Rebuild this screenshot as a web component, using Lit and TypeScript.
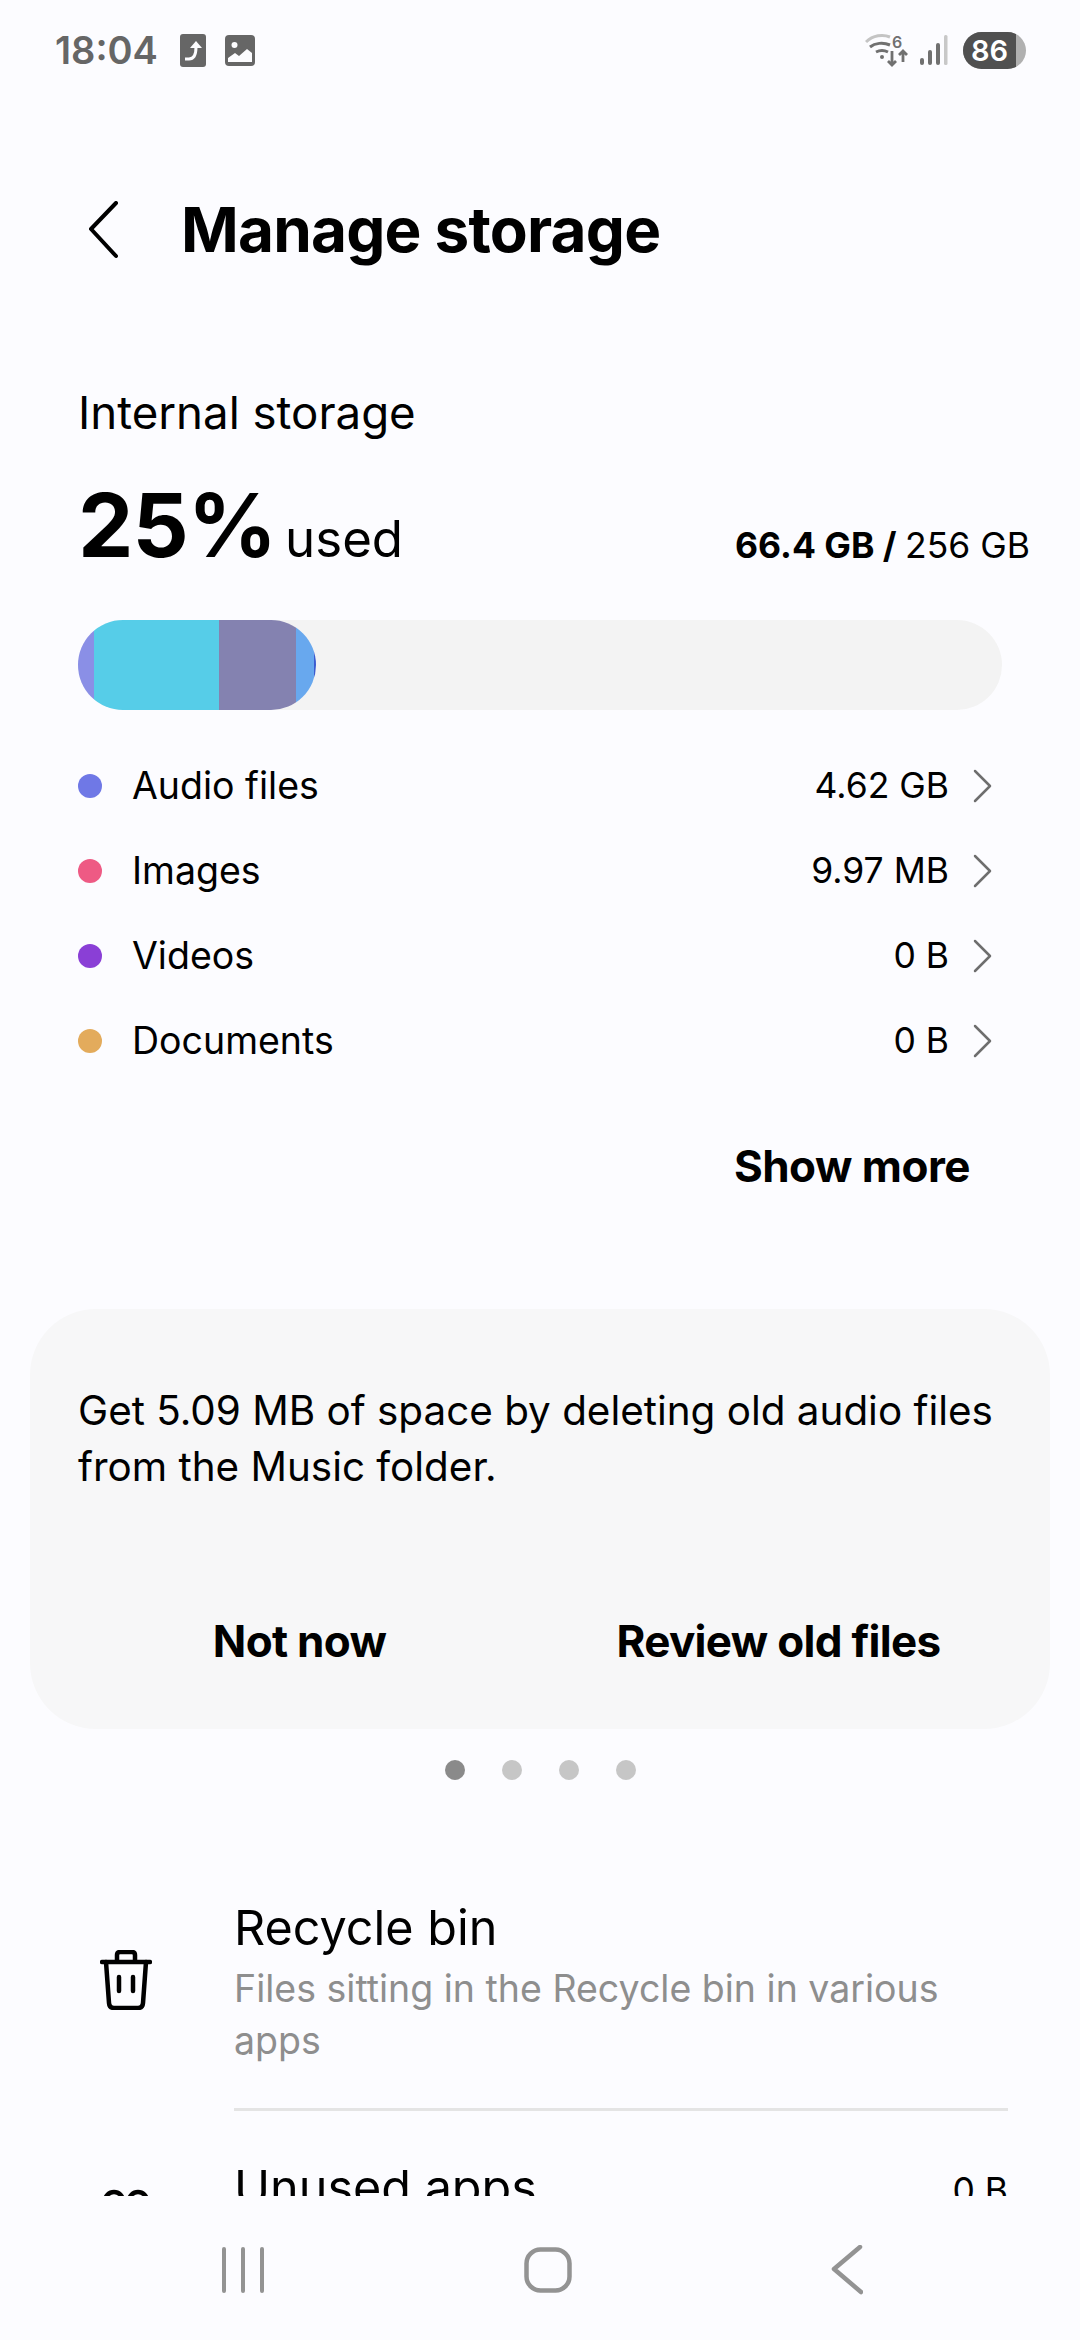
import { LitElement, html, css } from "lit";
import { customElement } from "lit/decorators.js";

const rows = [
  { c: "#6f78e6", l: "Audio files", v: "4.62 GB" },
  { c: "#ee5a84", l: "Images", v: "9.97 MB" },
  { c: "#8a3fd6", l: "Videos", v: "0 B" },
  { c: "#e3ab5c", l: "Documents", v: "0 B" },
];
const segs = [
  { c: "#8a8fe6", w: 16 },
  { c: "#56cde8", w: 125 },
  { c: "#8482b0", w: 77 },
  { c: "#68a8ee", w: 18 },
  { c: "#3a5bd0", w: 2 },
];

@customElement("app-root")
export class AppRoot extends LitElement {
  static styles = css`
    :host { display: block; width: 1080px; height: 2340px; background: #fcfcff; color: #000;
      font-family: Inter, "Noto Sans", sans-serif; overflow: hidden; }
    .page { height: 2340px; display: flex; flex-direction: column; }
    .status { height: 100px; flex: none; display: flex; align-items: center; justify-content: space-between; padding: 0 54px 0 55px; box-sizing: border-box; }
    .status-left { display: flex; align-items: center; color: #666; font-size: 38px; font-weight: 600; }
    .status-left svg { display: block; }
    .time { margin-right: 22px; }
    .ic2 { margin-left: 19px; }
    .status-right { display: flex; align-items: center; }
    .status-right svg { display: block; }
    .signal { margin-left: 9px; }
    .batt { width: 63px; height: 37px; border-radius: 19px; background: #b0b0b0; position: relative; overflow: hidden; margin-left: 15px; }
    .batt i { display: block; width: 53px; height: 37px; background: #505050; }
    .batt span { position: absolute; left: 0; width: 53px; top: 0; line-height: 37px; text-align: center; color: #fff; font-size: 29px; font-weight: 600; }
    .header { height: 130px; margin-top: 65px; flex: none; display: flex; align-items: center; padding-left: 88px; }
    .header h1 { margin: 0 0 0 62px; font-size: 62px; font-weight: 700; letter-spacing: -0.8px; line-height: 1; }
    .scroll { flex: 1; min-height: 0; overflow: hidden; }
    .sec { padding: 0 78px; display: flex; flex-direction: column; }
    .internal { font-size: 45.600px; line-height: 54px; margin-top: 91px; }
    .usedline { display: flex; align-items: flex-end; justify-content: space-between; margin-top: 35px; margin-right: -28px; }
    .pct { font-size: 88px; font-weight: 700; letter-spacing: -1px; line-height: 100px; }
    .used { font-size: 51px; margin-left: 9px; }
    .cap { font-size: 35.500px; line-height: 44px; font-weight: 700; margin-bottom: 7px; }
    .cap span { font-weight: 400; }
    .bar { height: 90px; width: 924px; border-radius: 45px; background: #f3f3f3; margin-top: 45px; }
    .fill { height: 90px; width: 238px; border-radius: 45px; overflow: hidden; display: flex; }
    .fill i { display: block; height: 90px; flex: none; }
    .rows { margin-top: 33px; }
    .row { height: 85px; display: flex; align-items: center; font-size: 37.500px; }
    .dot { width: 24px; height: 24px; border-radius: 50%; margin-right: 30px; }
    .lab { flex: 1; }
    .val { margin-right: 24px; font-size: 35.500px; }
    .chev { margin-right: 9px; display: block; }
    .more { align-self: flex-end; font-size: 44px; font-weight: 700; margin: 55px 32px 0 0; line-height: 56px; letter-spacing: -0.5px; }
    .card { margin: 115px 30px 0; height: 420px; box-sizing: border-box; background: #f7f7f8; border-radius: 66px; padding: 74px 48px 0; display: flex; flex-direction: column; }
    .card p { margin: 0; font-size: 40.400px; line-height: 56px; }
    .acts { display: grid; grid-template-columns: 1fr 1fr; margin: 118px -16px 0 -18px; font-size: 44px; font-weight: 700; line-height: 56px; letter-spacing: -0.7px; text-align: center; }
    .dots { display: flex; justify-content: center; gap: 37px; margin-top: 31px; }
    .dots i { width: 20px; height: 20px; border-radius: 50%; background: #c6c6c6; display: block; }
    .dots i.on { background: #8a8a8a; }
    .items { margin-top: 118px; }
    .item { display: flex; }
    .item .icon { width: 234px; flex: none; display: flex; justify-content: center; box-sizing: border-box; padding-left: 18px; align-items: flex-start; }
    .rec .icon { padding-top: 52px; }
    .unused .icon { padding-top: 78px; }
    .body { flex: 1; margin-right: 72px; }
    .t { font-size: 48.500px; line-height: 60px; }
    .s { font-size: 37.500px; line-height: 52px; color: #8e8e8e; margin-top: 5px; }
    .rec .body { height: 210px; border-bottom: 3px solid #e4e4e4; }
    .unused .body { display: flex; justify-content: space-between; margin-top: 47px; }
    .unused .v { font-size: 35.500px; line-height: 60px; padding-top: 3px; }
    .nav { height: 144px; flex: none; background: #fcfcff; display: flex; align-items: center; gap: 259px; padding: 4px 0 0 221px; box-sizing: border-box; }
    .nav svg { display: block; }
  `;

  render() {
    return html`<div class="page">
      <div class="status">
        <div class="status-left">
          <span class="time">18:04</span>
          <svg width="26" height="33" viewBox="0 0 26 33"><rect width="26" height="33" rx="3" fill="#666"/><path d="M5 25h4c5 0 7-4 7-12" fill="none" stroke="#fcfcff" stroke-width="3"/><path d="M16 7l6 7H10z" fill="#fcfcff"/></svg>
          <svg class="ic2" width="30" height="31" viewBox="0 0 30 31"><rect width="30" height="31" rx="4" fill="#666"/><circle cx="9.500" cy="10" r="3" fill="#fcfcff"/><path d="M3 27v-4l7-5 4 3 8-7 5 4v9z" fill="#fcfcff"/></svg>
        </div>
        <div class="status-right">
          <svg width="46" height="34" viewBox="0 0 46 34">
            <path d="M1 9C8 2 18 1 25 4" fill="none" stroke="#c4c4c4" stroke-width="3"/>
            <path d="M5 14c5-4 13-5 20-2" fill="none" stroke="#707070" stroke-width="3"/>
            <path d="M11 19c4-2 8-2 12 0" fill="none" stroke="#707070" stroke-width="3"/>
            <circle cx="17" cy="24" r="2" fill="#707070"/>
            <text x="27" y="15" font-size="16" font-weight="600" fill="#707070">6</text>
            <path d="M27 18v14M23 28l4 4 4-4M38 29V18M34 22l4-4 4 4" fill="none" stroke="#707070" stroke-width="2.800"/>
          </svg>
          <svg class="signal" width="28" height="30" viewBox="0 0 28 30">
            <rect x="0" y="23" width="4" height="7" rx="2" fill="#707070"/><rect x="8" y="15" width="4" height="15" rx="2" fill="#707070"/><rect x="16" y="8" width="4" height="22" rx="2" fill="#707070"/><rect x="24" y="0" width="3.500" height="30" rx="1.500" fill="#c8c8c8"/>
          </svg>
          <div class="batt"><i></i><span>86</span></div>
        </div>
      </div>
      <div class="header">
        <svg width="31" height="58" viewBox="0 0 31 58"><path d="M28 2L3 28l25 27" fill="none" stroke="#000" stroke-width="4" stroke-linecap="round" stroke-linejoin="round"/></svg>
        <h1>Manage storage</h1>
      </div>
      <div class="scroll">
        <div class="sec">
          <div class="internal">Internal storage</div>
          <div class="usedline">
            <div><span class="pct">25%</span><span class="used">used</span></div>
            <div class="cap">66.4 GB / <span>256 GB</span></div>
          </div>
          <div class="bar"><div class="fill">${segs.map((s) => html`<i style="background:${s.c};width:${s.w}px"></i>`)}</div></div>
          <div class="rows">
            ${rows.map((r) => html`<div class="row"><div class="dot" style="background:${r.c}"></div><div class="lab">${r.l}</div><div class="val">${r.v}</div>
              <svg class="chev" width="20" height="34" viewBox="0 0 20 34"><path d="M2 2l15 15L2 32" fill="none" stroke="#6e6e6e" stroke-width="2.500" stroke-linecap="round" stroke-linejoin="round"/></svg></div>`)}
          </div>
          <div class="more">Show more</div>
        </div>
        <div class="card">
          <p>Get 5.09 MB of space by deleting old audio files<br />from the Music folder.</p>
          <div class="acts"><span>Not now</span><span>Review old files</span></div>
        </div>
        <div class="dots"><i class="on"></i><i></i><i></i><i></i></div>
        <div class="items">
          <div class="item rec">
            <div class="icon">
              <svg width="52" height="60" viewBox="0 0 52 60"><g fill="none" stroke="#000" stroke-width="4.500" stroke-linecap="round" stroke-linejoin="round"><path d="M2 12h48"/><path d="M17 11V5q0-3 3-3h12q3 0 3 3v6"/><path d="M6 12l3 41q.4 5 5 5h24q4.600 0 5-5l3-41"/><path d="M19 27v14M33 27v14"/></g></svg>
            </div>
            <div class="body"><div class="t">Recycle bin</div><div class="s">Files sitting in the Recycle bin in various<br />apps</div></div>
          </div>
          <div class="item unused">
            <div class="icon">
              <svg width="48" height="48" viewBox="0 0 48 48"><g fill="none" stroke="#000" stroke-width="4.500"><circle cx="12" cy="12" r="9"/><circle cx="36" cy="12" r="9"/></g></svg>
            </div>
            <div class="body"><div class="t">Unused apps</div><div class="v">0 B</div></div>
          </div>
        </div>
      </div>
      <div class="nav">
        <svg width="44" height="46" viewBox="0 0 44 46"><path d="M3 2v42M22 2v42M41 2v42" stroke="#939393" stroke-width="4" stroke-linecap="round"/></svg>
        <svg width="48" height="46" viewBox="0 0 48 46"><rect x="2.500" y="2.500" width="43" height="41" rx="14" fill="none" stroke="#939393" stroke-width="4.500"/></svg>
        <svg width="32" height="50" viewBox="0 0 32 50"><path d="M29 2L3 24l27 23" fill="none" stroke="#939393" stroke-width="4.500" stroke-linecap="round" stroke-linejoin="round"/></svg>
      </div>
    </div>`;
  }
}
